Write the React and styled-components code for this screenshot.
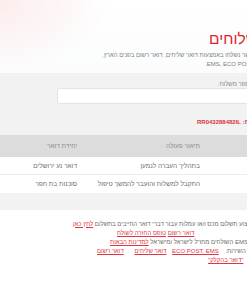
import React from "react";
import styled, { createGlobalStyle } from "styled-components";

const GlobalStyle = createGlobalStyle`
  html, body {
    margin: 0;
    padding: 0;
    background: #ffffff;
    overflow: hidden;
  }
  body {
    font-family: "Liberation Sans", "DejaVu Sans", Arial, sans-serif;
  }
`;

const Page = styled.div`
  direction: rtl;
  width: 480px;
`;

const Header = styled.header`
  height: 73px;
  box-sizing: border-box;
  padding-top: 31px;
  background:
    radial-gradient(ellipse 110px 70px at 0 0, rgba(238, 110, 110, 0.13), transparent),
    linear-gradient(180deg, #ffffff 0%, #fbfcfd 100%);
`;

// one line of text whose visual (left) end sits at $left
const Line = styled.div`
  display: flex;
  justify-content: flex-end;
  padding-left: ${(p) => p.$left}px;
  white-space: nowrap;
`;

const Title = styled(Line)`
  font-size: 15.5px;
  line-height: 15px;
  color: #e2232c;
  margin-bottom: 4.5px;
`;

const Desc = styled(Line)`
  font-size: 6px;
  line-height: 9px;
  color: #7d7d7d;
`;

const Panel = styled.section`
  background: #f2f2f2;
  padding: 7px 0 17px;
`;

const Label = styled(Line)`
  font-size: 6px;
  line-height: 8px;
  color: #8a8a8a;
`;

const Input = styled.div`
  margin-left: 57px;
  margin-right: 20px;
  height: 16px;
  box-sizing: border-box;
  background: #ffffff;
  border: 1px solid #e3e3e3;
  border-radius: 3px;
`;

const Tracking = styled(Line)`
  margin-top: 14px;
  font-size: 6px;
  line-height: 8px;
  font-weight: bold;
  color: #d8343d;
`;

const Table = styled.div`
  margin-top: 9px;
  display: grid;
  grid-template-columns: 272px 123px 85px;
  font-size: 6.5px;
`;

const HeadCell = styled.div`
  height: 22px;
  line-height: 22px;
  padding-right: 8px;
  background: #dcdcdc;
  color: #8c8c8c;
`;

const Cell = styled.div`
  height: 18px;
  line-height: 18px;
  padding-right: 8px;
  background: #ffffff;
  color: #6e6e6e;
  box-sizing: border-box;
  border-bottom: ${(p) => (p.$last ? "none" : "1px solid #ececec")};
`;

const Notes = styled.section`
  padding-top: 9.5px;
`;

const Note = styled(Line)`
  font-size: 6px;
  line-height: 9.2px;
  color: #6a6a6a;
`;

const Link = styled.a`
  color: #e0363f;
  text-decoration: underline;
  margin-right: ${(p) => p.$space || 0}px;
`;

const rows = [
  { date: "12/03/2024", action: "בתהליך העברה לנמען", unit: "דואר נע ירושלים" },
  { date: "10/03/2024", action: "התקבל למשלוח והועבר להמשך טיפול", unit: "סוכנות בת חפר" },
];

export default function App() {
  return (
    <Page>
      <GlobalStyle />
      <Header>
        <Title $left={209}>
          <span>מעקב משלוחים</span>
        </Title>
        <Desc $left={102}>
          <span>ניתן לאתר דברי דואר אשר נשלחו באמצעות דואר שליחים, דואר רשום בפנים הארץ,</span>
        </Desc>
        <Desc $left={205}>
          <span>{'דואר רשום לחו"ל, EMS, ECO POST.'}</span>
        </Desc>
      </Header>

      <Panel>
        <Label $left={218}>
          <span>הזן מספר משלוח:</span>
        </Label>
        <Input />
        <Tracking $left={197}>
          <span>מספר משלוח: RR043288482IL</span>
        </Tracking>
        <Table>
          <HeadCell>תאריך</HeadCell>
          <HeadCell>תיאור פעולה</HeadCell>
          <HeadCell>יחידת דואר</HeadCell>
          {rows.map((r, i) => (
            <React.Fragment key={i}>
              <Cell $last={i === rows.length - 1}>{r.date}</Cell>
              <Cell $last={i === rows.length - 1}>{r.action}</Cell>
              <Cell $last={i === rows.length - 1}>{r.unit}</Cell>
            </React.Fragment>
          ))}
        </Table>
      </Panel>

      <Notes>
        <Note $left={73}>
          <span>
            לביצוע תשלום מכס ו/או עמלות עבור דברי דואר החייבים בתשלום <Link href="#">לחץ כאן</Link>
          </span>
        </Note>
        <Note $left={117}>
          <span>
            <Link href="#">דואר רשום</Link> <Link href="#">טופס החזרה לשולח</Link>
          </span>
        </Note>
        <Note $left={110}>
          <span>
            {'שירות EMS השולחים מחו"ל לישראל ומישראל '}
            <Link href="#">למדינות הבאות</Link>
          </span>
        </Note>
        <Note $left={97}>
          <span>
            לרשותך זמני השירות: <Link href="#" $space={5}>ECO POST, EMS</Link>{" "}
            <Link href="#" $space={4}>דואר שליחים</Link>{" "}
            <Link href="#" $space={9}>דואר רשום</Link>
          </span>
        </Note>
        <Note $left={208}>
          <span>
            <Link href="#">{'"דואר בהקלק"'}</Link>
          </span>
        </Note>
      </Notes>
    </Page>
  );
}
